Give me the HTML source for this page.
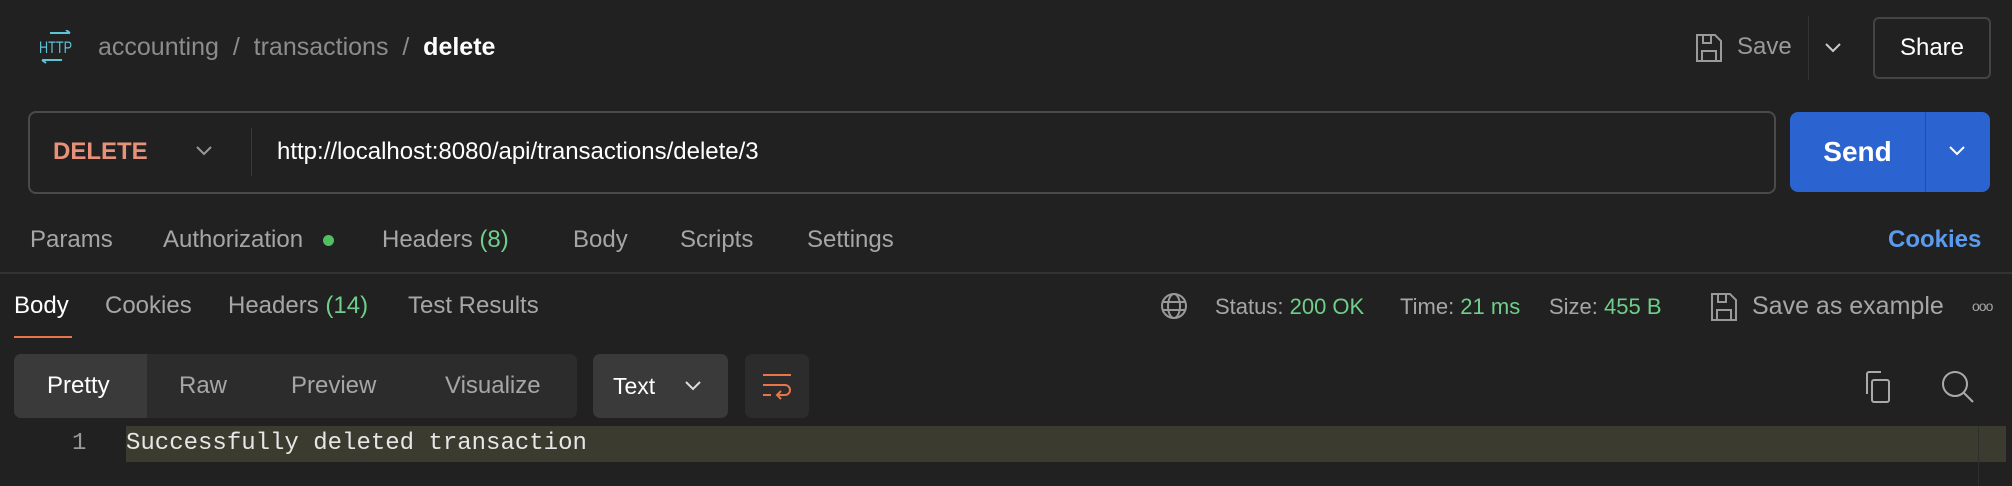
<!DOCTYPE html>
<html><head><meta charset="utf-8"><style>
*{margin:0;padding:0;box-sizing:border-box}
body{width:2012px;height:486px;background:#212121;font-family:"Liberation Sans",sans-serif;color:#a6a6a6;position:relative;overflow:hidden}
.a{position:absolute;white-space:nowrap}
.t{font-size:24px;line-height:30px}
.g{color:#6fcf8a}
svg{position:absolute}
</style></head><body>
<!-- header -->
<svg style="left:38px;top:30px" width="36" height="34" viewBox="0 0 36 34" fill="none" stroke="#5fc3d6" stroke-width="2"><path d="M12 3h20M28 0l4 3"/><path d="M4 30h20M8 33l-4-3"/><text x="1" y="23" font-size="17" fill="#5fc3d6" stroke="none" font-family="Liberation Sans" textLength="33" lengthAdjust="spacingAndGlyphs">HTTP</text></svg>
<div class="a" style="left:98px;top:31px;font-size:25px;line-height:32px;color:#8c8c8c">accounting&nbsp;&nbsp;/&nbsp;&nbsp;transactions&nbsp;&nbsp;/&nbsp;&nbsp;<span style="color:#fff;font-weight:bold">delete</span></div>
<svg style="left:1695px;top:33px" width="28" height="30" viewBox="0 0 28 30" fill="none" stroke="#9a9a9a" stroke-width="2"><path d="M2 2h18l6 6v20H2z"/><path d="M8 2v8h8V2"/><path d="M7 28v-10h14v10"/></svg>
<div class="a t" style="left:1737px;top:32px;color:#9a9a9a">Save</div>
<div class="a" style="left:1808px;top:16px;width:1px;height:64px;background:#333"></div>
<svg style="left:1824px;top:42px" width="18" height="12" viewBox="0 0 18 12" fill="none" stroke="#ccc" stroke-width="2"><path d="M2 2l7 7 7-7"/></svg>
<div class="a" style="left:1873px;top:17px;width:118px;height:62px;border:2px solid #444;border-radius:6px"></div>
<div class="a t" style="left:1873px;top:33px;width:118px;text-align:center;color:#fff">Share</div>
<!-- url bar -->
<div class="a" style="left:28px;top:111px;width:1748px;height:83px;border:2px solid #4a4a4a;border-radius:8px"></div>
<div class="a t" style="left:53px;top:137px;color:#e8917a;font-weight:bold">DELETE</div>
<svg style="left:196px;top:146px" width="16" height="10" viewBox="0 0 16 10" fill="none" stroke="#999" stroke-width="2"><path d="M1 1l7 7 7-7"/></svg>
<div class="a" style="left:251px;top:128px;width:1px;height:48px;background:#3a3a3a"></div>
<div class="a" style="left:277px;top:136px;color:#fff;font-size:24px;line-height:32px">http://localhost:8080/api/transactions/delete/3</div>
<div class="a" style="left:1790px;top:112px;width:200px;height:80px;background:#2b63d1;border-radius:8px"></div>
<div class="a" style="left:1925px;top:112px;width:1px;height:80px;background:#1f4fae"></div>
<div class="a" style="left:1790px;top:136px;width:135px;text-align:center;color:#fff;font-weight:bold;font-size:28px;line-height:32px">Send</div>
<svg style="left:1949px;top:146px" width="16" height="10" viewBox="0 0 16 10" fill="none" stroke="#fff" stroke-width="2"><path d="M1 1l7 7 7-7"/></svg>
<!-- request tabs -->
<div class="a t" style="left:30px;top:225px">Params</div>
<div class="a t" style="left:163px;top:225px">Authorization</div>
<div class="a" style="left:323px;top:235px;width:11px;height:11px;border-radius:50%;background:#4fbf5f"></div>
<div class="a t" style="left:382px;top:225px">Headers <span class="g">(8)</span></div>
<div class="a t" style="left:573px;top:225px">Body</div>
<div class="a t" style="left:680px;top:225px">Scripts</div>
<div class="a t" style="left:807px;top:225px">Settings</div>
<div class="a t" style="left:1888px;top:225px;color:#5b9bef;font-weight:bold">Cookies</div>
<div class="a" style="left:0;top:272px;width:2012px;height:2px;background:#333"></div>
<!-- response tabs -->
<div class="a t" style="left:14px;top:291px;color:#fff">Body</div>
<div class="a" style="left:14px;top:336px;width:58px;height:2px;background:#e8744a"></div>
<div class="a t" style="left:105px;top:291px">Cookies</div>
<div class="a t" style="left:228px;top:291px">Headers <span class="g">(14)</span></div>
<div class="a t" style="left:408px;top:291px">Test Results</div>
<svg style="left:1160px;top:292px" width="28" height="28" viewBox="0 0 28 28" fill="none" stroke="#999" stroke-width="2"><circle cx="14" cy="14" r="12"/><ellipse cx="14" cy="14" rx="6" ry="12"/><path d="M3 10h22M3 18h22"/></svg>
<div class="a" style="left:1215px;top:293px;font-size:22px;line-height:28px">Status: <span class="g">200 OK</span></div>
<div class="a" style="left:1400px;top:293px;font-size:22px;line-height:28px">Time: <span class="g">21 ms</span></div>
<div class="a" style="left:1549px;top:293px;font-size:22px;line-height:28px">Size: <span class="g">455 B</span></div>
<svg style="left:1710px;top:292px" width="28" height="30" viewBox="0 0 28 30" fill="none" stroke="#999" stroke-width="2"><path d="M2 2h18l6 6v20H2z"/><path d="M8 2v8h8V2"/><path d="M7 28v-10h14v10"/></svg>
<div class="a" style="left:1752px;top:291px;font-size:25px;line-height:30px">Save as example</div>
<div class="a" style="left:1972px;top:291px;font-size:14px;line-height:30px;letter-spacing:-1px">ooo</div>
<!-- toolbar -->
<div class="a" style="left:14px;top:354px;width:563px;height:64px;background:#2c2c2c;border-radius:7px"></div>
<div class="a" style="left:14px;top:354px;width:133px;height:64px;background:#3a3a3a;border-radius:7px 0 0 7px"></div>
<div class="a t" style="left:47px;top:371px;color:#fff">Pretty</div>
<div class="a t" style="left:179px;top:371px">Raw</div>
<div class="a t" style="left:291px;top:371px">Preview</div>
<div class="a t" style="left:445px;top:371px">Visualize</div>
<div class="a" style="left:593px;top:354px;width:135px;height:64px;background:#3a3a3a;border-radius:7px"></div>
<div class="a" style="left:613px;top:372px;color:#fff;font-size:23px;line-height:28px">Text</div>
<svg style="left:685px;top:381px" width="16" height="10" viewBox="0 0 16 10" fill="none" stroke="#ddd" stroke-width="2"><path d="M1 1l7 7 7-7"/></svg>
<div class="a" style="left:745px;top:354px;width:64px;height:64px;background:#2c2c2c;border-radius:7px"></div>
<svg style="left:762px;top:373px" width="30" height="28" viewBox="0 0 30 28" fill="none" stroke="#e8744a" stroke-width="2"><path d="M1 2h28M1 12h22a5 5 0 0 1 0 10h-7M19 18l-4 4 4 4M1 22h8"/></svg>
<svg style="left:1862px;top:370px" width="32" height="34" viewBox="0 0 32 34" fill="none" stroke="#aaa" stroke-width="2"><path d="M5 24V4a2 2 0 0 1 2-2h12"/><rect x="10" y="10" width="17" height="22" rx="2"/></svg>
<svg style="left:1941px;top:370px" width="34" height="34" viewBox="0 0 34 34" fill="none" stroke="#aaa" stroke-width="2"><circle cx="14" cy="14" r="12"/><path d="M23 23l9 9"/></svg>
<!-- code -->
<div class="a" style="left:126px;top:426px;width:1880px;height:36px;background:#3c3b30"></div>
<div class="a" style="left:1978px;top:426px;width:1px;height:60px;background:#2e2e2e"></div>
<div class="a" style="left:72px;top:430px;font-family:'Liberation Mono',monospace;font-size:24px;line-height:28px;color:#999">1</div>
<div class="a" style="left:126px;top:430px;font-family:'Liberation Mono',monospace;font-size:24px;line-height:28px;color:#e6e6e6">Successfully deleted transaction</div>
</body></html>
